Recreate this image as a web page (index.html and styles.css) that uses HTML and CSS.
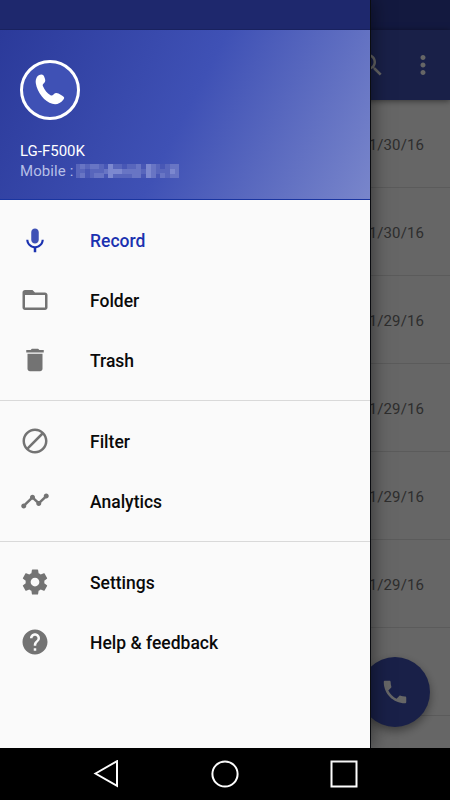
FILE: index.html
```html
<!DOCTYPE html>
<html lang="en">
<head>
  <meta charset="UTF-8">
  <meta name="viewport" content="width=device-width, initial-scale=1.0">
  <title>Call Recorder</title>
  <link rel="stylesheet" href="styles.css">
</head>
<body>
  <div class="screen">
    <div class="app">
      <div class="status-bar"></div>
      <header class="toolbar">
        <svg class="icon" viewBox="0 0 24 24"><path d="M15.5 14h-.79l-.28-.27C15.41 12.59 16 11.11 16 9.5 16 5.91 13.09 3 9.5 3S3 5.91 3 9.5 5.91 16 9.5 16c1.61 0 3.09-.59 4.23-1.57l.27.28v.79l5 4.99L20.49 19l-4.99-5zm-6 0C7.01 14 5 11.99 5 9.5S7.01 5 9.5 5 14 7.01 14 9.5 11.99 14 9.5 14z"/></svg>
        <svg class="icon" viewBox="0 0 24 24"><path d="M12 8c1.1 0 2-.9 2-2s-.9-2-2-2-2 .9-2 2 .9 2 2 2zm0 2c-1.1 0-2 .9-2 2s.9 2 2 2 2-.9 2-2-.9-2-2-2zm0 6c-1.1 0-2 .9-2 2s.9 2 2 2 2-.9 2-2-.9-2-2-2z"/></svg>
      </header>
      <ul class="calls">
        <li>01/30/16</li>
        <li>01/30/16</li>
        <li>01/29/16</li>
        <li>01/29/16</li>
        <li>01/29/16</li>
        <li>01/29/16</li>
        <li></li>
        <li></li>
      </ul>
      <div class="fab">
        <svg class="icon" viewBox="0 0 24 24"><path d="M6.62 10.79c1.44 2.83 3.76 5.14 6.59 6.59l2.2-2.2c.27-.27.67-.36 1.02-.24 1.12.37 2.33.57 3.57.57.55 0 1 .45 1 1V20c0 .55-.45 1-1 1-9.39 0-17-7.61-17-17 0-.55.45-1 1-1h3.5c.55 0 1 .45 1 1 0 1.25.2 2.45.57 3.57.11.35.03.74-.25 1.02l-2.2 2.2z"/></svg>
      </div>
      <div class="scrim"></div>
    </div>

    <nav class="drawer">
      <div class="drawer-status"></div>
      <div class="account">
        <svg class="avatar" viewBox="0 0 60 60">
          <circle cx="30" cy="30" r="28.5" fill="#3f51b5" stroke="#fff" stroke-width="3"/>
          <path d="M21.400 14.600c1.700 0 2.500 1.200 3.200 3.200.8 2.300 1.100 3.900-.4 5.100-1.300 1-1.900 1.900-1.200 3.400 1.700 3.900 4 7 7.500 9 1.300.7 2.200.1 3-.8 1.400-1.500 3-1.900 5-.9l3.800 2.200c2.200 1.300 2.400 2.300 1 3.900-3 3.700-6.500 5.200-11 4.100-7.500-2-15.100-11.400-16.500-20.600-.5-4.500 1.700-8.600 5.600-8.600z" fill="#fff"/>
        </svg>
        <div class="device">LG-F500K</div>
        <div class="mobile">
          Mobile :
          <svg class="masked" viewBox="0 0 103 14" shape-rendering="crispEdges">
            <path fill="#5866bc" d="M0 0h103v14H0z"/>
            <path fill="#6875c4" d="M4 0h5v5H4zM14 0h9v5h-9zM28 5h9v5h-9zM4 9h5v5H4zM18 9h10v5H18zM46 5h19v5H46zM60 0h5v5h-5zM56 9h9v5h-9zM75 0h5v14h-5zM84 9h5v5h-5zM94 0h9v14h-9z"/>
            <path fill="#7c88cf" d="M32 0h5v14h-5zM37 5h9v5h-9zM70 0h5v14h-5zM94 5h5v5h-5z"/>
            <path fill="#4857b5" d="M9 5h5v9H9zM28 0h4v5h-4zM28 10h4v4h-4zM46 0h5v5h-5zM65 0h5v5h-5zM65 10h5v4h-5zM80 10h4v4h-4zM84 0h5v5h-5z"/>
          </svg>
        </div>
      </div>
      <ul class="menu">
        <li class="active">
          <svg class="icon" viewBox="0 0 24 24"><path class="mic" d="M12 14c1.660 0 2.990-1.340 2.990-3L15 5c0-1.660-1.340-3-3-3S9 3.340 9 5v6c0 1.660 1.340 3 3 3z"/><path d="M17.300 11c0 3-2.540 5.100-5.300 5.100S6.700 14 6.700 11H5c0 3.410 2.720 6.230 6 6.720V21h2v-3.280c3.280-.480 6-3.300 6-6.720h-1.700z"/></svg>
          Record
        </li>
        <li>
          <svg class="icon" viewBox="0 0 24 24"><path d="M20 6h-8l-2-2H4c-1.100 0-1.990.9-1.990 2L2 18c0 1.100.9 2 2 2h16c1.100 0 2-.9 2-2V8c0-1.100-.9-2-2-2zm0 12H4V8h16v10z"/></svg>
          Folder
        </li>
        <li>
          <svg class="icon" viewBox="0 0 24 24"><path d="M6 19c0 1.100.9 2 2 2h8c1.100 0 2-.9 2-2V7H6v12zM19 4h-3.500l-1-1h-5l-1 1H5v2h14V4z"/></svg>
          Trash
        </li>
      </ul>
      <ul class="menu">
        <li>
          <svg class="icon" viewBox="0 0 24 24"><path d="M12 2C6.480 2 2 6.480 2 12s4.480 10 10 10 10-4.480 10-10S17.520 2 12 2zM4 12c0-4.420 3.580-8 8-8 1.850 0 3.550.63 4.900 1.690L5.690 16.900C4.630 15.550 4 13.850 4 12zm8 8c-1.850 0-3.550-.63-4.900-1.690L18.310 7.100C19.370 8.450 20 10.150 20 12c0 4.420-3.580 8-8 8z"/></svg>
          Filter
        </li>
        <li>
          <svg class="icon" viewBox="0 0 24 24"><path d="M23 8c0 1.100-.9 2-2 2-.18 0-.35-.02-.51-.07l-3.560 3.550c.05.16.07.34.07.52 0 1.100-.9 2-2 2s-2-.9-2-2c0-.18.02-.36.07-.52l-2.550-2.550c-.16.05-.34.07-.52.07s-.36-.02-.52-.07l-4.550 4.560c.05.16.07.33.07.51 0 1.100-.9 2-2 2s-2-.9-2-2 .9-2 2-2c.18 0 .35.02.51.07l4.560-4.550C8.020 9.360 8 9.180 8 9c0-1.100.9-2 2-2s2 .9 2 2c0 .18-.02.36-.07.52l2.550 2.550c.16-.05.34-.07.52-.07s.36.02.52.07l3.550-3.560C19.020 8.350 19 8.180 19 8c0-1.100.9-2 2-2s2 .9 2 2z"/></svg>
          Analytics
        </li>
      </ul>
      <ul class="menu">
        <li>
          <svg class="icon" viewBox="0 0 24 24"><path d="M19.430 12.980c.04-.32.07-.64.07-.98s-.03-.66-.07-.98l2.110-1.650c.19-.15.24-.42.12-.64l-2-3.460c-.12-.22-.39-.3-.61-.22l-2.490 1c-.52-.4-1.080-.73-1.690-.98l-.38-2.650C14.460 2.180 14.250 2 14 2h-4c-.25 0-.46.18-.49.42l-.38 2.650c-.61.25-1.170.59-1.690.98l-2.490-1c-.23-.09-.49 0-.61.22l-2 3.460c-.13.22-.07.49.12.64l2.110 1.650c-.04.32-.07.65-.07.98s.03.66.07.98l-2.110 1.650c-.19.15-.24.42-.12.64l2 3.460c.12.22.39.3.61.22l2.490-1c.52.4 1.080.73 1.690.98l.38 2.650c.03.24.24.42.49.42h4c.25 0 .46-.18.49-.42l.38-2.650c.61-.25 1.170-.59 1.690-.98l2.490 1c.23.09.49 0 .61-.22l2-3.460c.12-.22.07-.49-.12-.64l-2.110-1.650zM12 15.500c-1.930 0-3.500-1.570-3.500-3.500s1.570-3.500 3.500-3.500 3.500 1.570 3.500 3.500-1.570 3.500-3.500 3.500z"/></svg>
          Settings
        </li>
        <li>
          <svg class="icon" viewBox="0 0 24 24"><path d="M12 2C6.480 2 2 6.480 2 12s4.480 10 10 10 10-4.480 10-10S17.520 2 12 2zm1 17h-2v-2h2v2zm2.070-7.750l-.9.920C13.450 12.900 13 13.500 13 15h-2v-.5c0-1.100.45-2.100 1.170-2.830l1.240-1.260c.37-.36.59-.86.59-1.410 0-1.100-.9-2-2-2s-2 .9-2 2H8c0-2.210 1.790-4 4-4s4 1.790 4 4c0 .88-.36 1.680-.93 2.250z"/></svg>
          Help &amp; feedback
        </li>
      </ul>
    </nav>

    <footer class="nav-bar">
      <svg viewBox="0 0 30 30"><path d="M4.500 13.500L26 1.200v24.600z"/></svg>
      <svg viewBox="0 0 30 30"><circle cx="15" cy="14" r="12.600"/></svg>
      <svg viewBox="0 0 30 30"><path d="M2.500 1.500h25v25h-25z"/></svg>
    </footer>
  </div>
</body>
</html>
```
FILE: styles.css
```css
* {
  box-sizing: border-box;
}
body {
  margin: 0;
  font-family: Roboto, "Liberation Sans", sans-serif;
  background-color: #000;
}
ul {
  list-style: none;
  margin: 0;
  padding: 0;
}
.screen {
  position: relative;
  width: 450px;
  height: 800px;
  overflow: hidden;
  display: flex;
  flex-direction: column;
}
.icon {
  width: 30px;
  height: 30px;
  flex: none;
  fill: currentColor;
}

/* page behind the drawer */
.app {
  position: relative;
  height: 748px;
  overflow: hidden;
  background-color: #fff;
}
.status-bar {
  height: 30px;
  background-color: #303f9f;
}
.toolbar {
  position: relative;
  height: 70px;
  display: flex;
  align-items: center;
  justify-content: flex-end;
  gap: 22px;
  padding-right: 12px;
  color: #fff;
  background-color: #3f51b5;
  box-shadow: 0 1px 6px rgba(0, 0, 0, 0.5);
}
.calls li {
  height: 88px;
  padding: 2px 26px 0 0;
  display: flex;
  align-items: center;
  justify-content: flex-end;
  font-size: 15px;
  letter-spacing: 0.1px;
  color: #737373;
  border-bottom: 1px solid #e3e3e3;
}
.fab {
  position: absolute;
  right: 20px;
  bottom: 21px;
  width: 70px;
  height: 70px;
  border-radius: 50%;
  display: flex;
  align-items: center;
  justify-content: center;
  color: #fff;
  background-color: #3f51b5;
  box-shadow: 0 4px 10px rgba(0, 0, 0, 0.4);
}
.scrim {
  position: absolute;
  inset: 0;
  background-color: rgba(0, 0, 0, 0.6);
}

/* drawer */
.drawer {
  position: absolute;
  top: 0;
  left: 0;
  width: 370px;
  height: 748px;
  background-color: #fafafa;
  box-shadow: 1px 0 0 #0a0c10, 2px 0 18px rgba(0, 0, 0, 0.5);
}
.drawer-status {
  height: 30px;
  background-color: #1e286d;
  border-bottom: 1px solid #19225f;
}
.account {
  height: 170px;
  padding: 29.5px 20px 0;
  background: linear-gradient(117deg, #2b3a9a 0%, #3f51b5 50%, #7986cb 100%);
  border-bottom: 1px solid #1a35a0;
}
.avatar {
  display: block;
  width: 60px;
  height: 60px;
  margin-bottom: 21.5px;
}
.device {
  font-size: 15px;
  line-height: 20px;
  color: #fff;
}
.mobile {
  display: flex;
  align-items: center;
  gap: 3px;
  font-size: 15px;
  line-height: 20px;
  letter-spacing: 0.1px;
  color: #b6bfe6;
}
.masked {
  width: 103px;
  height: 14px;
}
.menu {
  padding: 10px 0;
}
.menu + .menu {
  border-top: 1px solid #d9d9d9;
}
.menu li {
  height: 60px;
  padding: 2px 0 0 20px;
  display: flex;
  align-items: center;
  gap: 40px;
  font-size: 17.5px;
  font-weight: 500;
  color: #0a0a0a;
}
.menu .icon {
  margin-bottom: 2px;
  fill: #737373;
}
.menu .active {
  color: #1a31b0;
}
.menu .active .icon {
  margin-bottom: 0;
  fill: #1a31b0;
}
.menu .active .mic {
  fill: #3f51b5;
}

/* system buttons */
.nav-bar {
  height: 52px;
  padding: 12px 91px 0 91px;
  display: flex;
  justify-content: space-between;
  background-color: #000;
}
.nav-bar svg {
  width: 30px;
  height: 30px;
  fill: none;
  stroke: #fff;
  stroke-width: 2;
}
```
